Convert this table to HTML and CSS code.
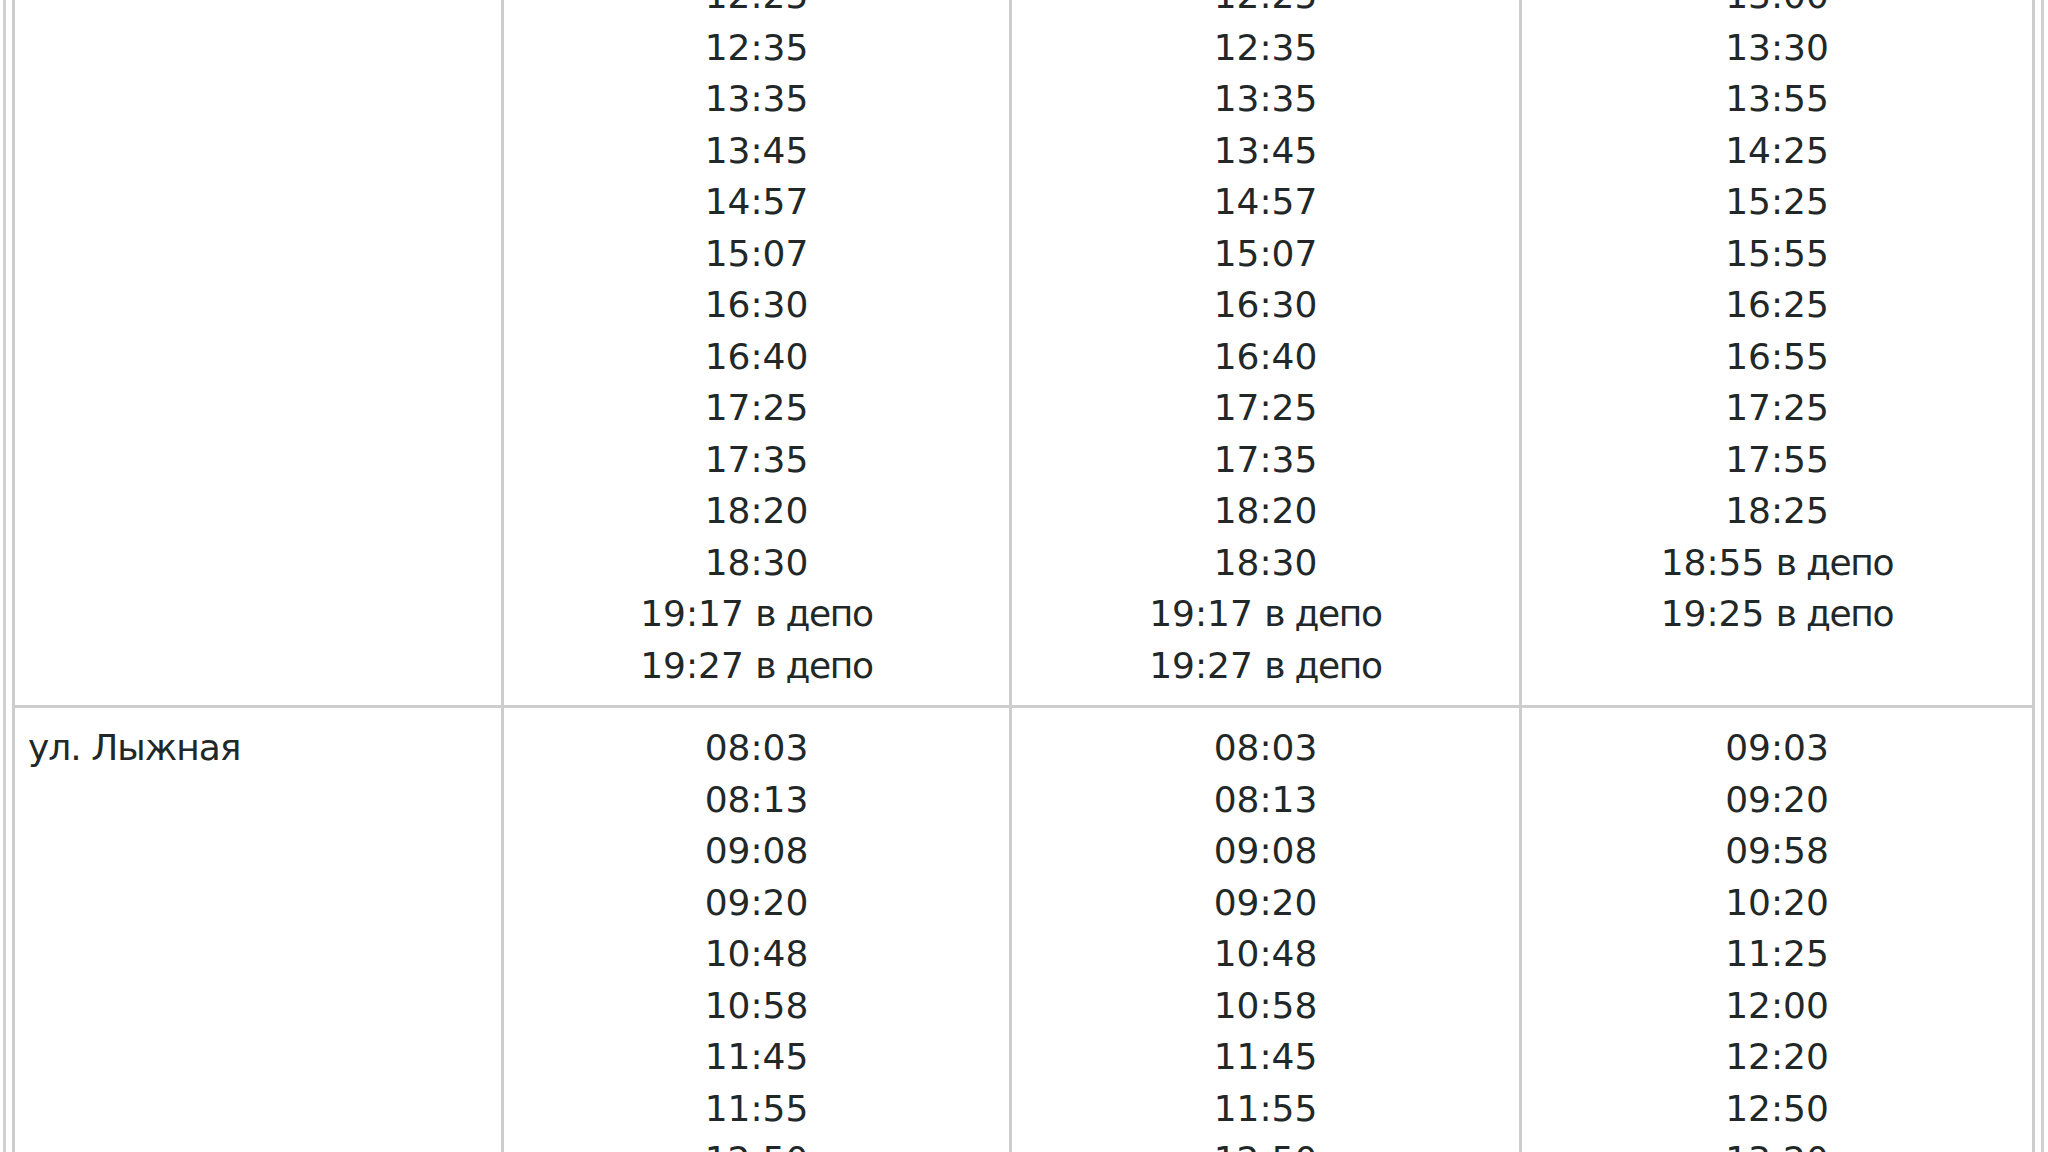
FILE: index.html
```html
<!DOCTYPE html>
<html>
<head>
    <title>Расписание движения</title>
    <meta charset="utf-8">
    <meta name="viewport" content="width=device-width, initial-scale=1">
    <link rel="stylesheet" href="styles.css">
</head>

<body>
    <div class="schedule">
        <table class="timetable">
            <colgroup>
                <col class="col-stop">
                <col class="col-a">
                <col class="col-b">
                <col class="col-c">
            </colgroup>
            <tr>
                <td class="stop"></td>
                <td class="times">12:25<br>12:35<br>13:35<br>13:45<br>14:57<br>15:07<br>16:30<br>16:40<br>17:25<br>17:35<br>18:20<br>18:30<br>19:17 <span class="note">в депо</span><br>19:27 <span class="note">в депо</span></td>
                <td class="times">12:25<br>12:35<br>13:35<br>13:45<br>14:57<br>15:07<br>16:30<br>16:40<br>17:25<br>17:35<br>18:20<br>18:30<br>19:17 <span class="note">в депо</span><br>19:27 <span class="note">в депо</span></td>
                <td class="times">13:00<br>13:30<br>13:55<br>14:25<br>15:25<br>15:55<br>16:25<br>16:55<br>17:25<br>17:55<br>18:25<br>18:55 <span class="note">в депо</span><br>19:25 <span class="note">в депо</span></td>
            </tr>
            <tr>
                <td class="stop">ул. Лыжная</td>
                <td class="times">08:03<br>08:13<br>09:08<br>09:20<br>10:48<br>10:58<br>11:45<br>11:55<br>12:50<br>13:00</td>
                <td class="times">08:03<br>08:13<br>09:08<br>09:20<br>10:48<br>10:58<br>11:45<br>11:55<br>12:50<br>13:00</td>
                <td class="times">09:03<br>09:20<br>09:58<br>10:20<br>11:25<br>12:00<br>12:20<br>12:50<br>13:20<br>13:50</td>
            </tr>
        </table>
    </div>
</body>
</html>
```

FILE: styles.css
```css
body {
    margin: 0;
    background-color: #ffffff;
    font-family: "DejaVu Sans", Verdana, sans-serif;
    color: #222828;
}

/* page is scrolled part-way into the table */
.schedule {
    margin: -56px 4px 0 3px;
    padding: 6px;
    border: 3px solid #d0d0d0;
}

.timetable {
    width: 100%;
    border-collapse: collapse;
    table-layout: fixed;
    font-size: 36px;
    line-height: 51.5px;
}

.col-stop {
    width: 489px;
}

.col-a {
    width: 508px;
}

.col-b {
    width: 510px;
}

.timetable td {
    border: 3px solid #cdcdcd;
    padding: 14px 13px;
    vertical-align: top;
}

.stop {
    text-align: left;
    letter-spacing: -1px;
}

.times {
    text-align: center;
}

.note {
    letter-spacing: -1.3px;
}
```
